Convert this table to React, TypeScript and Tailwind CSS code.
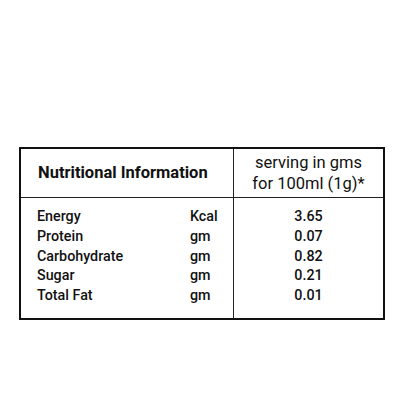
const rows = [
  { name: "Energy", unit: "Kcal", value: "3.65" },
  { name: "Protein", unit: "gm", value: "0.07" },
  { name: "Carbohydrate", unit: "gm", value: "0.82" },
  { name: "Sugar", unit: "gm", value: "0.21" },
  { name: "Total Fat", unit: "gm", value: "0.01" },
];

export default function App() {
  return (
    <div className="w-[400px] h-[400px] bg-white pt-[147px] pl-[19px] text-[#111]" style={{ fontFamily: "Roboto, 'Noto Sans', sans-serif" }}>
      <div className="w-[366px] h-[173px] border-2 border-[#111] flex flex-col">
        <div className="flex h-[49px] border-b-[1.5px] border-[#222]">
          <div className="w-[213px] border-r-[1.5px] border-[#222] flex items-center pl-[17px] text-[16.5px] font-bold">
            Nutritional Information
          </div>
          <div className="flex-1 flex flex-col items-center justify-center text-[16.5px] leading-[21px]">
            <span>serving in gms</span>
            <span>for 100ml (1g)*</span>
          </div>
        </div>
        <div className="flex flex-1">
          <div className="w-[213px] border-r-[1.5px] border-[#222] pt-[9px] pl-[16px] text-[14.3px] font-medium leading-[19.8px]">
            {rows.map((r) => (
              <div key={r.name} className="flex">
                <span className="w-[153px]">{r.name}</span>
                <span>{r.unit}</span>
              </div>
            ))}
          </div>
          <div className="flex-1 pt-[9px] text-[14.3px] font-medium leading-[19.8px] text-center">
            {rows.map((r) => (
              <div key={r.name}>{r.value}</div>
            ))}
          </div>
        </div>
      </div>
    </div>
  );
}
